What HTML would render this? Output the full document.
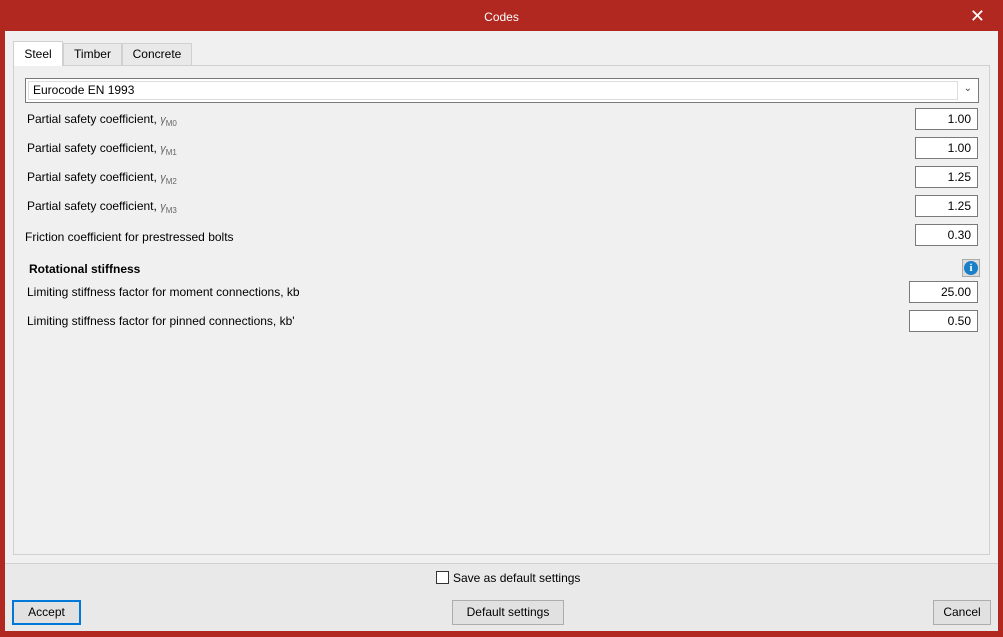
<!DOCTYPE html><html><head><style>
*{margin:0;padding:0;box-sizing:border-box}
body{width:1003px;height:637px;background:#b0281f;font-family:"Liberation Sans",sans-serif;font-size:12px;color:#000;position:relative;overflow:hidden}
.a{position:absolute}
.title{left:0;top:0;width:1003px;height:31px;color:#fff;text-align:center;line-height:34px;font-size:12px}
.x{right:18px;top:6px;color:#fff;font-size:18px}
.win{left:5px;top:31px;width:993px;height:600px;background:#f0f0f0}
.low{left:5px;top:563px;width:993px;height:68px;background:#e9e9e9;border-top:1px solid #d0d0d0}
.panel{left:13px;top:65px;width:977px;height:490px;border:1px solid #d0d0d0;background:#f0f0f0}
.tab{top:43px;height:22px;border:1px solid #d0d0d0;border-bottom:none;background:#e9e9e9;text-align:center;line-height:21px}
.lbl{left:27px}
.in{width:63px;height:22px;background:#fff;border:1px solid #7a7a7a;text-align:right;padding-right:6px;line-height:20px}
.g{font-style:italic;color:#666;font-size:11px}
.g sub{font-size:8px;font-style:normal}
.btn{height:25px;border:1px solid #adadad;background:#e1e1e1;text-align:center;line-height:23px}
</style></head><body>
<div class="a title">Codes</div><div class="a x">✕</div>
<div class="a win"></div>
<div class="a low"></div>
<div class="a panel"></div>
<div class="a tab" style="left:13px;width:50px;top:41px;height:25px;background:#fff;line-height:25px">Steel</div>
<div class="a tab" style="left:63px;width:59px">Timber</div>
<div class="a tab" style="left:122px;width:70px">Concrete</div>
<div class="a" style="left:25px;top:78px;width:954px;height:25px;border:1px solid #7a7a7a;background:#fff;padding:2px"><div style="border:1px solid #ddd;height:19px;width:930px;line-height:17px;padding-left:4px">Eurocode EN 1993</div><div class="a" style="right:6px;top:4px;font-size:10px;color:#444">&#8964;</div></div>
<div class="a lbl" style="top:112px">Partial safety coefficient, <span class="g">γ<sub>M0</sub></span></div>
<div class="a lbl" style="top:141px">Partial safety coefficient, <span class="g">γ<sub>M1</sub></span></div>
<div class="a lbl" style="top:170px">Partial safety coefficient, <span class="g">γ<sub>M2</sub></span></div>
<div class="a lbl" style="top:199px">Partial safety coefficient, <span class="g">γ<sub>M3</sub></span></div>
<div class="a in" style="left:915px;top:108px">1.00</div>
<div class="a in" style="left:915px;top:137px">1.00</div>
<div class="a in" style="left:915px;top:166px">1.25</div>
<div class="a in" style="left:915px;top:195px">1.25</div>
<div class="a lbl" style="left:25px;top:230px">Friction coefficient for prestressed bolts</div>
<div class="a in" style="left:915px;top:224px">0.30</div>
<div class="a" style="left:29px;top:262px;font-weight:bold">Rotational stiffness</div>
<div class="a" style="left:962px;top:259px;width:18px;height:18px;border:1px solid #aaa;background:#ddd"><div style="margin:1px;width:14px;height:14px;border-radius:50%;background:#1a7fc9;color:#fff;font-weight:bold;font-size:11px;text-align:center;line-height:14px;font-family:'Liberation Serif',serif">i</div></div>
<div class="a lbl" style="top:285px">Limiting stiffness factor for moment connections, kb</div>
<div class="a lbl" style="top:314px">Limiting stiffness factor for pinned connections, kb'</div>
<div class="a in" style="left:909px;top:281px;width:69px">25.00</div>
<div class="a in" style="left:909px;top:310px;width:69px">0.50</div>
<div class="a" style="left:436px;top:571px;width:13px;height:13px;border:1px solid #333;background:#fff"></div>
<div class="a" style="left:453px;top:571px">Save as default settings</div>
<div class="a btn" style="left:12px;top:600px;width:69px;border:2px solid #0078d7;line-height:21px">Accept</div>
<div class="a btn" style="left:452px;top:600px;width:112px">Default settings</div>
<div class="a btn" style="left:933px;top:600px;width:58px">Cancel</div>
</body></html>
